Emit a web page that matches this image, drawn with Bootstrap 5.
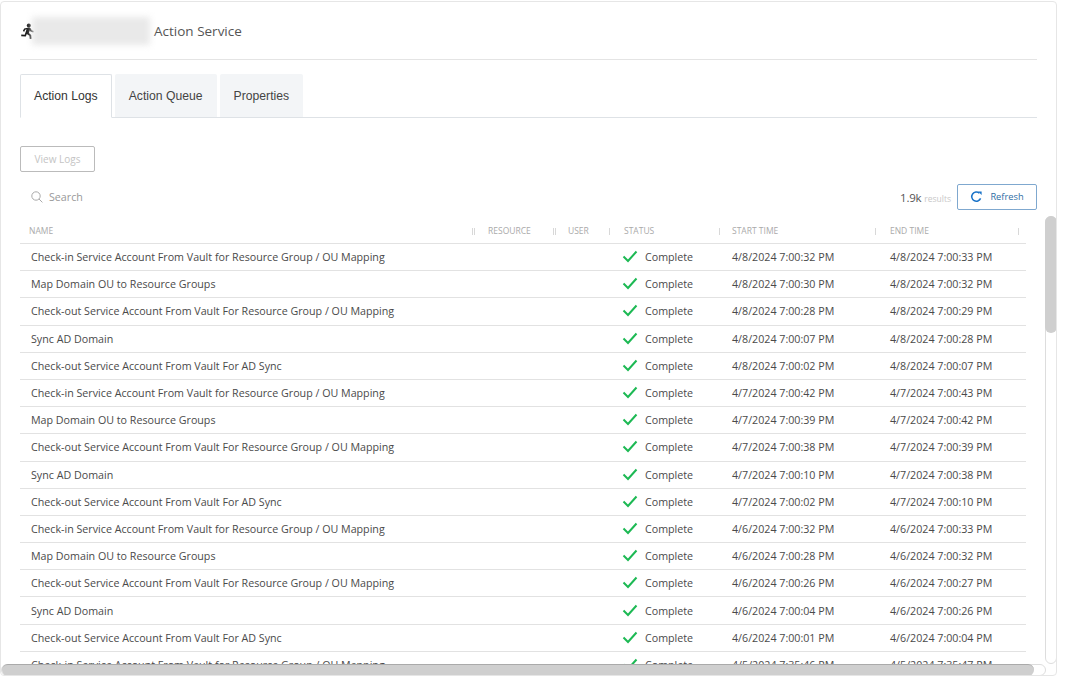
<!DOCTYPE html>
<html lang="en"><head><meta charset="utf-8">
<link href="https://cdn.jsdelivr.net/npm/bootstrap@5.3.0/dist/css/bootstrap.min.css" rel="stylesheet">
<style>
html,body{height:100%;overflow:hidden;background:#fff}
body{font-family:"Open Sans","Liberation Sans",sans-serif;font-size:11px;color:#444}
.shell{position:relative;width:1057px;height:675px;margin-top:1px;border:1px solid #e6e6e6;border-radius:4px;overflow:hidden;padding:0 19px}
.headbar{height:58px;border-bottom:1px solid #e4e4e4;font-size:13.5px;color:#555}
.headbar span{margin-top:2px}
.runner{width:14px;height:16px;margin-right:-2px}
.smudge{width:118px;height:28px;background:#e9e9e9;filter:blur(3px);margin-right:4px}
.tabbar{margin-top:14px;height:44px;gap:3px;border-bottom:1px solid #dee2e6;font-family:"Liberation Sans",sans-serif}
.tabbar .nav-link{height:43px;padding:0 14px;line-height:45px;font-size:12.2px;color:#444;background:#f3f5f7;border:0;border-radius:2px 2px 0 0;margin:0}
.tabbar .nav-link.active{height:44px;padding:0 13px;line-height:42px;background:#fff;border:1px solid #dee2e6;border-bottom-color:#fff;color:#333}
.viewbtn{display:block;margin-top:28px;width:75px;height:26px;padding:0;font-size:10px;--bs-btn-disabled-color:#c4c4c4;--bs-btn-disabled-bg:#fff;--bs-btn-disabled-border-color:#bbb;--bs-btn-disabled-opacity:1;border-radius:2px}
.tools{height:39px;margin-top:12px}
.searchbox{height:26px;padding-left:11px;font-size:10.7px;color:#999;gap:6px}
.tally{font-size:11.5px;color:#555;margin-right:6px;margin-top:2px;letter-spacing:-.2px}
.tally small{font-size:8.5px;color:#c8c8c8;letter-spacing:0}
.refreshbtn{width:80px;height:26px;padding:0;font-size:9.3px;color:#2e6da4;background:#fff;border:1px solid #7fa8cf;border-radius:2px;gap:7px}
.viewport{height:454px;width:1006px;overflow:hidden;margin-top:-5px;position:relative}
.logtable{table-layout:fixed;width:1006px;margin:0;--bs-table-color:#4a4a4a;--bs-table-border-color:#e2e2e2;border-collapse:collapse}
.logtable th{height:25.5px;padding:2px 0 0 9px;font-size:8.5px;font-weight:400;color:#aaa;position:relative;vertical-align:middle;white-space:nowrap;border-bottom:1px solid #e2e2e2;box-shadow:none}
.logtable th::after{content:"";position:absolute;right:5px;top:10px;width:1px;height:7px;background:#d8d8d8}
.logtable th:nth-child(1)::after{right:4px;width:3px;background:none;border:solid #d8d8d8;border-width:0 1px}
.logtable th:nth-child(2)::after{right:3px;width:3px;background:none;border:solid #d8d8d8;border-width:0 1px}
.logtable th:nth-child(4)::after{right:3px}
.logtable th:nth-child(6)::after{right:7px}
.logtable td{height:27.2px;padding:0 0 0 11px;font-size:10.7px;white-space:nowrap;vertical-align:middle;box-shadow:none}
.logtable td.stat{padding-left:7px}
.logtable td.time{padding-left:9px}
.tickmark{width:16px;height:13px;margin-right:7px;vertical-align:-2px}
.trackv{position:absolute;left:1044px;top:214px;width:12px;height:448px;border:1px solid #ddd;border-radius:6px;background:#fff}
.thumbv{position:absolute;left:-1px;top:-1px;width:12px;height:117px;border-radius:6px;background:#cfcfcf}
.trackh{position:absolute;left:0;top:662px;width:1045px;height:12px;border:1px solid #ddd;border-radius:6px;background:#fff}
.thumbh{position:absolute;left:0;top:-1px;height:12px;width:1032px;border-radius:6px;background:#cfcfcf;border-top:1px solid #aaa}
</style></head><body>
<div class="shell">
  <div class="headbar d-flex align-items-center">
    <svg class="runner" viewBox="0 0 14 16" fill="#1a1a1a"><circle cx="8.8" cy="2.4" r="2"/><path d="M4.2 5.4 8.8 4.4c1.1-.1 1.7.5 2.1 1.3l.8 1.5 2.1.7-.5 1.5-2.8-1-.7-1.1-.9 2.8 2.3 1.8.4 3.8-1.8.2-.4-3.2-2.6-1.7-1 2.4-4.6-.2.1-1.6 3.4.1 1.9-5.4-1.5.4-.8 2-1.5-.6z"/></svg>
    <div class="smudge"></div>
    <span>Action Service</span>
  </div>
  <div class="nav tabbar">
    <a class="nav-link active" href="#">Action Logs</a>
    <a class="nav-link" href="#">Action Queue</a>
    <a class="nav-link" href="#">Properties</a>
  </div>
  <button class="btn viewbtn" disabled>View Logs</button>
  <div class="tools d-flex align-items-start justify-content-between">
    <div class="searchbox d-flex align-items-center">
      <svg width="12" height="12" viewBox="0 0 12 12" fill="none" stroke="#aaa"><circle cx="5" cy="5" r="4.2"/><path d="m8 8 3.4 3.4"/></svg>
      <span>Search</span>
    </div>
    <div class="d-flex align-items-center">
      <span class="tally">1.9k <small>results</small></span>
      <button class="btn refreshbtn d-flex align-items-center justify-content-center">
        <svg width="13" height="12" viewBox="0 0 13 12" fill="none" stroke="#1a73c8" stroke-width="1.5"><path d="M9.4 2.2A4.6 4.6 0 1 0 10.6 7.4"/><path d="M8.2 .6h3.4v3.4z" fill="#1a73c8" stroke="none"/></svg>
        <span>Refresh</span>
      </button>
    </div>
  </div>
  <div class="viewport">
    <table class="table logtable">
      <colgroup><col style="width:459px"><col style="width:80px"><col style="width:56px"><col style="width:108px"><col style="width:158px"><col style="width:145px"></colgroup>
      <thead><tr><th>NAME</th><th>RESOURCE</th><th>USER</th><th>STATUS</th><th>START TIME</th><th>END TIME</th></tr></thead>
      <tbody id="rows"></tbody>
    </table>
  </div>
  <div class="trackv"><div class="thumbv"></div></div>
  <div class="trackh"><div class="thumbh"></div></div>
</div>
<script>
const C='Check-in Service Account From Vault for Resource Group / OU Mapping',M='Map Domain OU to Resource Groups',O='Check-out Service Account From Vault For Resource Group / OU Mapping',S='Sync AD Domain',A='Check-out Service Account From Vault For AD Sync';
const d=[[C,'4/8/2024 7:00:32 PM','4/8/2024 7:00:33 PM'],[M,'4/8/2024 7:00:30 PM','4/8/2024 7:00:32 PM'],[O,'4/8/2024 7:00:28 PM','4/8/2024 7:00:29 PM'],[S,'4/8/2024 7:00:07 PM','4/8/2024 7:00:28 PM'],[A,'4/8/2024 7:00:02 PM','4/8/2024 7:00:07 PM'],
[C,'4/7/2024 7:00:42 PM','4/7/2024 7:00:43 PM'],[M,'4/7/2024 7:00:39 PM','4/7/2024 7:00:42 PM'],[O,'4/7/2024 7:00:38 PM','4/7/2024 7:00:39 PM'],[S,'4/7/2024 7:00:10 PM','4/7/2024 7:00:38 PM'],[A,'4/7/2024 7:00:02 PM','4/7/2024 7:00:10 PM'],
[C,'4/6/2024 7:00:32 PM','4/6/2024 7:00:33 PM'],[M,'4/6/2024 7:00:28 PM','4/6/2024 7:00:32 PM'],[O,'4/6/2024 7:00:26 PM','4/6/2024 7:00:27 PM'],[S,'4/6/2024 7:00:04 PM','4/6/2024 7:00:26 PM'],[A,'4/6/2024 7:00:01 PM','4/6/2024 7:00:04 PM'],
[C,'4/5/2024 7:35:46 PM','4/5/2024 7:35:47 PM']];
const tick='<svg class="tickmark" viewBox="0 0 16 13" fill="none" stroke="#1db954" stroke-width="2"><path d="M1.5 6.5 6 11 14.5 1.5"/></svg>';
document.getElementById('rows').innerHTML=d.map(r=>`<tr><td>${r[0]}</td><td></td><td></td><td class="stat">${tick}Complete</td><td class="time">${r[1]}</td><td class="time">${r[2]}</td></tr>`).join('');
</script>
<script src="https://cdn.jsdelivr.net/npm/bootstrap@5.3.0/dist/js/bootstrap.bundle.min.js"></script>
</body></html>
